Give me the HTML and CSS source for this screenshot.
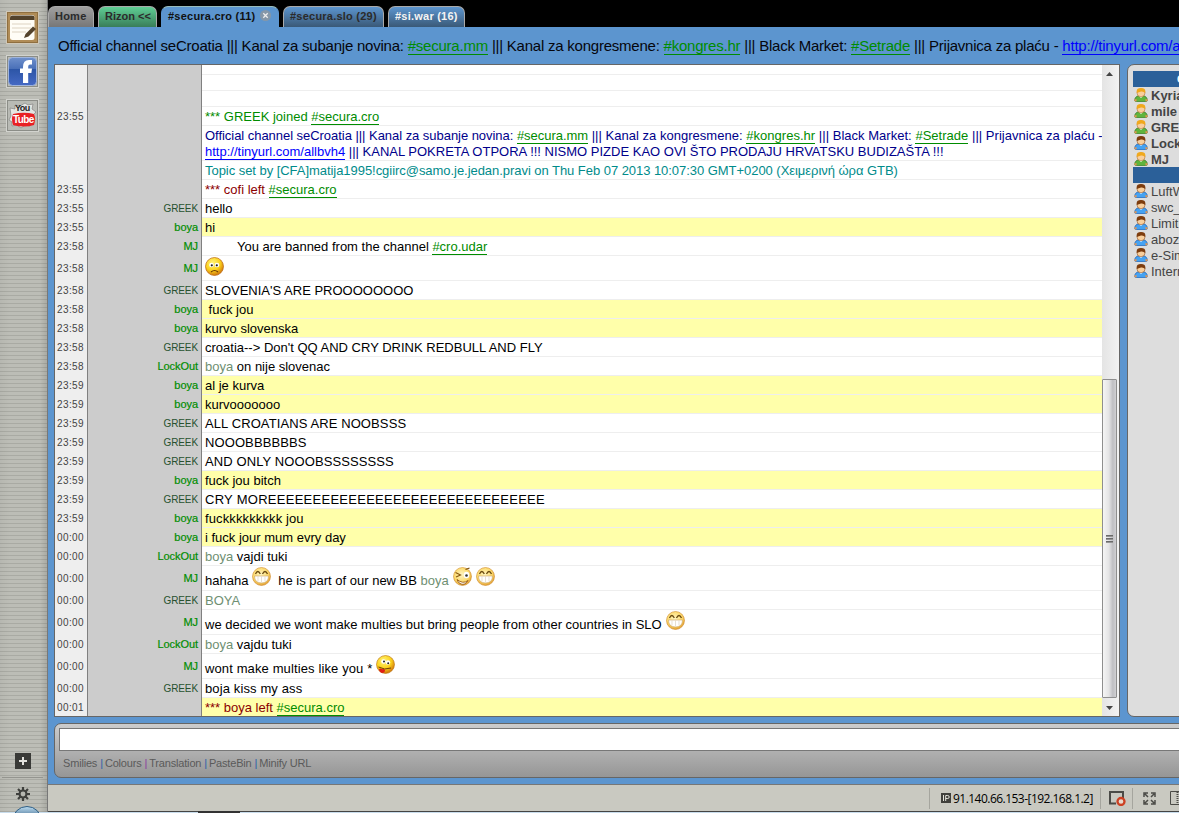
FILE: index.html
```
<!DOCTYPE html>
<html lang="hr">
<head>
<meta charset="utf-8">
<title>#secura.cro</title>
<link rel="stylesheet" href="styles.css">
</head>
<body>
<svg class="defs" width="0" height="0" aria-hidden="true">
  <defs>
    <radialGradient id="face" cx=".4" cy=".3" r=".75"><stop offset="0" stop-color="#fff37a"/><stop offset=".55" stop-color="#fbd21c"/><stop offset="1" stop-color="#c9680a"/></radialGradient>
    <radialGradient id="pale" cx=".45" cy=".4" r=".7"><stop offset="0" stop-color="#fff6c4"/><stop offset=".6" stop-color="#fcd96a"/><stop offset="1" stop-color="#d07a12"/></radialGradient>
    <linearGradient id="fb" x1="0" y1="0" x2="0" y2="1"><stop offset="0" stop-color="#6f90cc"/><stop offset=".4" stop-color="#4a70b8"/><stop offset=".41" stop-color="#2c55a6"/><stop offset="1" stop-color="#4569c4"/></linearGradient>
  </defs>
  <symbol id="sad" viewBox="0 0 19 19"><circle cx="9.5" cy="9.5" r="9" fill="url(#face)" stroke="#b9640c" stroke-width=".7"/><circle cx="6.5" cy="8" r="2.3" fill="#fff"/><circle cx="12" cy="8" r="2.3" fill="#fff"/><circle cx="6.8" cy="8.3" r="1.1" fill="#222"/><circle cx="11.8" cy="8.3" r="1.1" fill="#222"/><path d="M6 15q3.5-3 7 0" fill="none" stroke="#6d3a05" stroke-width="1.2"/></symbol>
  <symbol id="grin" viewBox="0 0 19 19"><circle cx="9.5" cy="9.5" r="9" fill="url(#pale)" stroke="#d08a2a" stroke-width=".6"/><path d="M3.5 7q2.300-5 4.800 0M10.500 7q2.500-5 5 0" fill="none" stroke="#6a4a10" stroke-width="1.300"/><path d="M2.500 9h14q0 7-7 7t-7-7z" fill="#fff" stroke="#c9a060" stroke-width=".6"/><path d="M6 9.500v5M9.500 9.500v6M13 9.500v5" stroke="#ddd3be" stroke-width=".7"/></symbol>
  <symbol id="wink" viewBox="0 0 19 19"><circle cx="9.500" cy="9.500" r="9" fill="url(#pale)" stroke="#c98018" stroke-width=".5"/><path d="M2.500 5.500l5 2.500L3 10" fill="none" stroke="#8a5a10" stroke-width="1.200"/><ellipse cx="13.500" cy="8" rx="2.800" ry="3.200" fill="#fff"/><circle cx="13.500" cy="8.500" r="1.300" fill="#333"/><path d="M12.500 2.500l4-1.500" stroke="#7a4a08" stroke-width="1.200"/><path d="M4 12.500q6 5 11 1-3 5-7 3.500-3-1-4-4.500z" fill="#fff" stroke="#9a5a10" stroke-width=".9"/></symbol>
  <symbol id="tongue" viewBox="0 0 19 19"><circle cx="9.500" cy="9.500" r="9" fill="url(#face)" stroke="#b9700c" stroke-width=".6"/><circle cx="7.500" cy="6.500" r="2.300" fill="#fff"/><circle cx="12" cy="7.500" r="2.200" fill="#fff"/><circle cx="8" cy="6.500" r="1" fill="#222"/><circle cx="12.200" cy="8.200" r="1" fill="#222"/><path d="M2.500 12q6 3.500 12.500 1" fill="none" stroke="#704006" stroke-width="1"/><path d="M3 14q2-1 3 .3 2-1 3 .7 0 3-3 3-3-1-3-4z" fill="#df1f16"/></symbol>
  <symbol id="op" viewBox="0 0 14 14"><path d="M.8 13q-.5-5.500 6.200-5.500T13.200 13l-2 .7h-8.400z" fill="#5fb43c" stroke="#3c7d28" stroke-width=".8"/><path d="M5 8l2 2 2-2z" fill="#fff"/><rect x="3.200" y="1" width="7.600" height="7.500" rx="3" fill="#f9cf9c" stroke="#b36d2b" stroke-width=".6"/><path d="M2.700 5V3q0-3 4.300-3t4.300 3v2q-2-2-4.300-1.500T2.700 5z" fill="#f0a81c"/><path d="M.5 13v-1.500l2-.5v2.500zM13.500 13v-1.500l-2-.5v2.500z" fill="#e79650"/></symbol>
  <symbol id="man" viewBox="0 0 14 14"><path d="M.8 13q-.5-5.500 6.200-5.500T13.200 13l-2 .7h-8.400z" fill="#45a2f2" stroke="#2366b8" stroke-width=".8"/><path d="M5 8l2 2 2-2z" fill="#fff"/><rect x="3.200" y="1" width="7.600" height="7.500" rx="3" fill="#f9cf9c" stroke="#8d4c1b" stroke-width=".6"/><path d="M2.700 5V3q0-3 4.300-3t4.300 3v2q-2-2-4.300-1.500T2.700 5z" fill="#7d3c0d"/><path d="M.5 13v-1.500l2-.5v2.500zM13.500 13v-1.500l-2-.5v2.500z" fill="#e79650"/></symbol>
</svg>
<div class="screen">
  <aside class="dock">
    <div class="dock-top">
      <svg class="app" viewBox="0 0 33 33"><rect x=".5" y=".5" width="32" height="32" fill="#b08c57" stroke="#d0c8b8"/><rect x="1.500" y="1.500" width="30" height="30" fill="none" stroke="#8f6f40"/><rect x="4" y="4" width="24.500" height="25" rx="2.500" fill="#fffdf6"/><path d="M4 9V6.500Q4 4.500 6.500 4.500h19.500Q28.500 4.500 28.500 6.500V9z" fill="#54432c"/><path d="M6 13h19M6 17h19M6 21h14" stroke="#ddd3c2"/><path d="M18 27l1.500-4L27 15.500l3 2.500-7.500 7.500z" fill="#54432c"/></svg>
      <svg class="app" viewBox="0 0 33 33"><rect x=".5" y=".5" width="32" height="32" fill="#b9bbb5" stroke="#d2d3ce"/><rect x="1.500" y="1.500" width="30" height="30" fill="none" stroke="#8b8d87"/><rect x="2.500" y="2.500" width="28" height="28" rx="4" fill="url(#fb)" stroke="#9fb4dc"/><path d="M17 28V18h-3v-4.500h3V12q0-7 6-7h3v4.500h-2q-1.800 0-1.800 2v2h3.800l-.6 4.500h-3.200v10z" fill="#fff"/></svg>
      <div class="tube"><svg class="app" viewBox="0 0 33 33"><rect x=".5" y=".5" width="32" height="32" fill="#b9bbb5" stroke="#d2d3ce"/><rect x="1.500" y="1.500" width="30" height="30" fill="none" stroke="#8b8d87"/><path d="M4 9l5 1 0-4 5 1 5-3 3 2 5-1-1 5 4 3-3 3 2 5-3 2-2 4-5-1-4 3-4-3-5 1 0-4-3-2 2-4z" fill="#e4e5e2" stroke="#777" stroke-width=".6"/><path d="M7 15q11-2.500 21 0 2 5 0 11-10 3-21 0-2-6 0-11z" fill="#e82023"/></svg><span class="you">You</span><span class="tub">Tube</span></div>
    </div>
    <div class="dock-bottom">
      <svg class="plus" viewBox="0 0 16 16"><path fill="#393a37" d="M0 0h16v16H0z"/><path d="M8 4v8M4 8h8" stroke="#e2e2dd" stroke-width="2"/></svg>
      <svg class="gear" viewBox="0 0 14 14"><g stroke="#3f403d" stroke-width="2.200"><path d="M7 0v14M0 7h14M2 2l10 10M12 2L2 12"/></g><circle cx="7" cy="7" r="4.500" fill="#3f403d"/><circle cx="7" cy="7" r="2.400" fill="#b6b7b0"/></svg>
    </div>
  </aside>
  <main class="main">
    <nav class="tabs">
      <div class="tab home">Home</div><div class="tab net">Rizon &lt;&lt;</div><div class="tab active">#secura.cro (11)<svg class="close" viewBox="0 0 11 11"><circle cx="5.500" cy="5.500" r="5.500" fill="#8597a8"/><path d="M3.300 3.300l4.400 4.400M7.700 3.300L3.300 7.700" stroke="#eee" stroke-width="1.300"/></svg></div><div class="tab slo">#secura.slo (29)</div><div class="tab war">#si.war (16)</div>
    </nav>
    <div class="topic">Official channel seCroatia ||| Kanal za subanje novina: <a>#secura.mm</a> ||| Kanal za kongresmene: <a>#kongres.hr</a> ||| Black Market: <a>#Setrade</a> ||| Prijavnica za plaću - <a class="url">http://tinyurl.com/allbvh4</a></div>
    <div class="middle">
      <section class="chat">
        <div class="log">
          <div class="row blank first"><time></time><b></b><p></p></div>
          <div class="row blank"><time></time><b></b><p></p></div>
          <div class="row blank"><time></time><b></b><p></p></div>
          <div class="row"><time>23:55</time><b></b><p class="join">*** GREEK joined <a>#secura.cro</a></p></div>
          <div class="row two"><time></time><b></b><p class="navy"><span class="l1">Official channel seCroatia ||| Kanal za subanje novina: <a>#secura.mm</a></span><span class="l2"> ||| Kanal za kongresmene: <a>#kongres.hr</a> ||| Black Market: <a>#Setrade</a> ||| Prijavnica za plaću -</span><br><a class="url">http://tinyurl.com/allbvh4</a> ||| KANAL POKRETA OTPORA !!! NISMO PIZDE KAO OVI ŠTO PRODAJU HRVATSKU BUDIZAŠTA !!!</p></div>
          <div class="row"><time></time><b></b><p class="teal">Topic set by [CFA]matija1995!cgiirc@samo.je.jedan.pravi on Thu Feb 07 2013 10:07:30 GMT+0200 (Χειμερινή ώρα GTB)</p></div>
          <div class="row"><time>23:55</time><b></b><p class="left">*** cofi left <a>#secura.cro</a></p></div>
          <div class="row"><time>23:55</time><b class="greek">GREEK</b><p>hello</p></div>
          <div class="row hl"><time>23:55</time><b>boya</b><p>hi</p></div>
          <div class="row"><time>23:58</time><b>MJ</b><p class="indent">You are banned from the channel <a>#cro.udar</a></p></div>
          <div class="row tall"><time>23:58</time><b>MJ</b><p><svg class="smile sad"><use href="#sad"/></svg></p></div>
          <div class="row"><time>23:58</time><b class="greek">GREEK</b><p>SLOVENIA'S ARE PROOOOOOOO</p></div>
          <div class="row hl"><time>23:58</time><b>boya</b><p>&nbsp;fuck jou</p></div>
          <div class="row hl"><time>23:58</time><b>boya</b><p>kurvo slovenska</p></div>
          <div class="row"><time>23:58</time><b class="greek">GREEK</b><p>croatia--&gt; Don't QQ AND CRY DRINK REDBULL AND FLY</p></div>
          <div class="row"><time>23:58</time><b>LockOut</b><p><i>boya</i> on nije slovenac</p></div>
          <div class="row hl"><time>23:59</time><b>boya</b><p>al je kurva</p></div>
          <div class="row hl"><time>23:59</time><b>boya</b><p>kurvooooooo</p></div>
          <div class="row"><time>23:59</time><b class="greek">GREEK</b><p class="caps">ALL CROATIANS ARE NOOBSSS</p></div>
          <div class="row"><time>23:59</time><b class="greek">GREEK</b><p class="caps">NOOOBBBBBBS</p></div>
          <div class="row"><time>23:59</time><b class="greek">GREEK</b><p class="caps">AND ONLY NOOOBSSSSSSSS</p></div>
          <div class="row hl"><time>23:59</time><b>boya</b><p>fuck jou bitch</p></div>
          <div class="row"><time>23:59</time><b class="greek">GREEK</b><p class="cry">CRY MOREEEEEEEEEEEEEEEEEEEEEEEEEEEEEEE</p></div>
          <div class="row hl"><time>23:59</time><b>boya</b><p class="loose">fuckkkkkkkkk jou</p></div>
          <div class="row hl"><time>00:00</time><b>boya</b><p>i fuck jour mum evry day</p></div>
          <div class="row"><time>00:00</time><b>LockOut</b><p><i>boya</i> vajdi tuki</p></div>
          <div class="row tall"><time>00:00</time><b>MJ</b><p>hahaha <svg class="smile back"><use href="#grin"/></svg>&nbsp; he is part of our new BB <i>boya</i> <svg class="smile"><use href="#wink"/></svg> <svg class="smile back"><use href="#grin"/></svg></p></div>
          <div class="row"><time>00:00</time><b class="greek">GREEK</b><p><i>BOYA</i></p></div>
          <div class="row tall"><time>00:00</time><b>MJ</b><p>we decided we wont make multies but bring people from other countries in SLO <svg class="smile"><use href="#grin"/></svg></p></div>
          <div class="row"><time>00:00</time><b>LockOut</b><p><i>boya</i> vajdu tuki</p></div>
          <div class="row tall"><time>00:00</time><b>MJ</b><p class="loose">wont make multies like you * <svg class="smile back"><use href="#tongue"/></svg></p></div>
          <div class="row"><time>00:00</time><b class="greek">GREEK</b><p class="loose">boja kiss my ass</p></div>
          <div class="row hl"><time>00:01</time><b></b><p class="left">*** boya left <a>#secura.cro</a></p></div>
        </div>
        <div class="scroll">
          <svg class="arrow" viewBox="0 0 7 4"><path d="M0 4L3.500 0 7 4z" fill="#444"/></svg>
          <div class="thumb"><span></span><span></span><span></span></div>
          <svg class="arrow down" viewBox="0 0 7 4"><path d="M0 0h7L3.500 4z" fill="#444"/></svg>
        </div>
      </section>
      <section class="users">
        <div class="group">Operators</div>
        <div class="user op"><svg><use href="#op"/></svg>Kyria</div>
        <div class="user op"><svg><use href="#op"/></svg>mile</div>
        <div class="user op"><svg><use href="#op"/></svg>GREEK</div>
        <div class="user op"><svg><use href="#man"/></svg>LockOut</div>
        <div class="user op"><svg><use href="#op"/></svg>MJ</div>
        <div class="group"></div>
        <div class="user"><svg><use href="#man"/></svg>LuftW</div>
        <div class="user"><svg><use href="#man"/></svg>swc_</div>
        <div class="user"><svg><use href="#man"/></svg>Limit</div>
        <div class="user"><svg><use href="#man"/></svg>aboz</div>
        <div class="user"><svg><use href="#man"/></svg>e-Sim</div>
        <div class="user"><svg><use href="#man"/></svg>Intern</div>
      </section>
    </div>
    <section class="composer">
      <div class="input"></div>
      <div class="tools">Smilies<s>|</s>Colours<s class="v">|</s>Translation<s>|</s>PasteBin<s>|</s>Minify URL</div>
    </section>
    <footer class="status">
      <div class="ip"><svg viewBox="0 0 10 10"><path fill="#40403c" d="M0 0h10v10H0z"/><path d="M2.500 2v6M4.700 8V2.500h2q1.500 0 1.500 1.500t-1.500 1.500h-2" fill="none" stroke="#e4e4dc"/></svg>91.140.66.153-[192.168.1.2]</div>
      <div class="cell block"><svg viewBox="0 0 17 15"><path d="M7 12.500H1V1h13v6" fill="none" stroke="#4b4b47" stroke-width="2"/><circle cx="12" cy="10.500" r="3.500" fill="#e8d9ce" stroke="#cc4123" stroke-width="2.300"/></svg></div>
      <div class="cell full"><svg viewBox="0 0 13 13"><path d="M1 5V1h4M8 1h4v4M12 8v4H8M5 12H1V8M2 2l3 3M11 2L8 5M2 11l3-3M11 11L8 8" fill="none" stroke="#4b4b47" stroke-width="1.500"/></svg><svg class="split" viewBox="0 0 14 14"><path d="M.5.5h14v13H.5z" fill="none" stroke="#4b4b47"/><path d="M7.500 1v12" stroke="#4b4b47" stroke-dasharray="1 1" stroke-width="2"/></svg></div>
    </footer>
  </main>
  <div class="taskbar"><div class="orb"></div><div class="task"></div></div>
</div>
</body>
</html>
```
FILE: styles.css
```
* { box-sizing: border-box; }
body { margin: 0; font-family: "Liberation Sans", Arial, sans-serif; overflow: hidden; }
.defs { position: absolute; }
.screen { width: 1179px; height: 813px; overflow: hidden; display: grid; grid-template: 812px 1px / 48px 1131px; }
.dock { display: flex; flex-direction: column; justify-content: space-between; border-right: 1px solid #777; background: linear-gradient(90deg, rgba(0,0,0,.03), transparent 20% 85%, rgba(0,0,0,.1)), repeating-linear-gradient(#bcbdb6 0 3px, #a9aaa3 3px 4px); }
.dock-top { padding: 11px 0 0 6px; display: flex; flex-direction: column; gap: 11px; }
.app { width: 33px; height: 33px; display: block; }
.tube { position: relative; height: 33px; }
.you, .tub { position: absolute; left: 9px; top: 4px; font-size: 9px; line-height: 10px; font-weight: bold; color: #222; letter-spacing: -.6px; }
.tub { top: 14px; left: 7px; color: #fff; font-size: 10px; line-height: 13px; letter-spacing: -.6px; }
.dock-bottom { height: 59px; display: flex; flex-direction: column; align-items: center; padding-right: 2px; }
.plus { width: 16px; height: 16px; flex: none; }
.dock-bottom::after { content: ""; width: 41px; height: 1px; background: #94958f; order: 1; margin-top: 8px; }
.gear { width: 14px; height: 14px; order: 2; margin-top: 9px; flex: none; }
.main { background: #5c95cf; display: flex; flex-direction: column; overflow: hidden; }
.tabs { height: 27px; flex: none; background: #000; display: flex; gap: 4px; padding-top: 6px; }
.tab { height: 21px; border: 1px solid #aaa; border-bottom: 0; border-radius: 7px 7px 0 0; font-size: 11px; font-weight: bold; line-height: 18px; padding-left: 6px; letter-spacing: .23px; white-space: nowrap; display: flex; align-items: center; padding-bottom: 3px; color: #2b2b2b; }
.home { width: 46px; background: linear-gradient(#a0a0a0, #777); }
.net { width: 59px; background: linear-gradient(#5fce95, #397d58); letter-spacing: 0; }
.active { width: 118px; background: #5c95cf; color: #111; border-color: #5c95cf; border-top-color: #9bb; }
.slo { width: 101px; background: linear-gradient(#5c95cf, #3a5977); }
.war { width: 77px; background: linear-gradient(#5c95cf, #3a5977); color: #f4f4f4; }
.close { width: 11px; height: 11px; margin-left: 5px; }
.topic { height: 37px; flex: none; padding-left: 10px; font-size: 15px; line-height: 38px; letter-spacing: -.228px; white-space: nowrap; color: #06060c; }
a { color: #008c00; text-decoration: none; border-bottom: 1px solid; }
a.url { color: #00f; }
.middle { display: flex; gap: 7px; height: 653px; flex: none; padding-left: 6px; }
.chat { width: 1066px; flex: none; height: 653px; border: 1px solid #666; background: #fff; display: flex; }
.log { width: 1047px; flex: none; overflow: hidden; background: linear-gradient(90deg, #eee 32px, #808080 32px 33px, #ccc 33px 146px, #808080 146px 147px, #fff 147px); }
.row { display: grid; grid-template: 100% / 32px 113px 1fr; column-gap: 1px; height: 19px; }
.row.blank { height: 16px; }
.row.first { height: 10px; }
.row.two { height: 35px; }
.row.tall { height: 25px; }
.row > * { margin: 0; font-weight: normal; white-space: nowrap; }
.row time { font-size: 10px; line-height: 20px; padding-left: 2px; letter-spacing: .4px; color: #444; }
.row b { font-size: 11px; line-height: 18px; text-align: right; padding-right: 3px; color: #008c00; -webkit-text-stroke: .2px #008c00; letter-spacing: -.05px; }
.row b.greek { color: #27512f; font-size: 10px; line-height: 20px; letter-spacing: -.1px; -webkit-text-stroke: 0; }
.row.tall time { line-height: 26px; }
.row.tall b { line-height: 24px; }
.row p { font-size: 13px; line-height: 16px; padding: 2px 0 0 3px; border-bottom: 1px solid #eee; color: #000; }
.row.blank p { padding: 0; }
.row.hl p { background: #ffffaa; }
.row p.join { color: #008c00; }
.row p.left { color: #8b0000; }
.row p.navy { color: #00008b; }
.l1 { letter-spacing: -.04px; }
.l2 { letter-spacing: .025px; }
.row p.teal { color: #008b8b; letter-spacing: -.045px; }
.cry { letter-spacing: .27px; }
.caps { letter-spacing: .1px; }
.loose { letter-spacing: .12px; }
.row p.indent { padding-left: 35px; }
.row p a { display: inline-block; line-height: 14px; height: 15px; vertical-align: baseline; }
i { font-style: normal; color: #6f8f72; }
.row.tall p { line-height: 21px; padding-top: 1px; }
.smile { width: 19px; height: 19px; vertical-align: -1px; margin-left: 1px; }
.smile.back { margin-left: 0; }
.smile.sad { margin-left: 0; }
.scroll { width: 17px; background: linear-gradient(90deg, #e4e4e4, #f2f2f2); display: flex; flex-direction: column; align-items: center; padding: 7px 2px 0 0; }
.arrow { width: 7px; height: 4px; flex: none; }
.thumb { margin-top: 303px; width: 15px; height: 319px; flex: none; border: 1px solid #8e8e8e; border-radius: 1px; background: linear-gradient(90deg, #f5f5f5, #e4e4e5 45%, #bfbfc3 75%, #d0d0d2); display: flex; flex-direction: column; align-items: center; justify-content: center; gap: 1px; }
.thumb span { width: 7px; height: 2px; background: linear-gradient(#555, #aaa); }
.arrow.down { margin-top: 8px; }
.users { width: 160px; flex: none; border: 1px solid #666; border-radius: 7px; background: #ddd; padding: 6px 5px; font-size: 13px; color: #444; }
.group { height: 16px; background: #2b6099; color: #fff; font-size: 11px; line-height: 16px; padding-left: 44px; font-weight: bold; }
.user { height: 16px; line-height: 17px; display: flex; align-items: center; gap: 3px; padding-left: 1px; white-space: nowrap; }
.user svg { width: 14px; height: 14px; }
.user.op { font-weight: bold; }
.composer { margin: 6px 0 0 6px; height: 55px; width: 1200px; flex: none; border: 1px solid #666; border-radius: 7px; background: linear-gradient(#ccc, #969696); padding: 4px; }
.input { height: 23px; background: #fff; border: 1px solid #777; }
.tools { padding: 6px 0 0 4px; font-size: 11px; line-height: 13px; letter-spacing: -.18px; color: #5a5a5a; white-space: nowrap; }
s { text-decoration: none; color: #2a5fa8; margin: 0 2px 0 3px; }
s.v { color: #8a3fa0; }
.status { margin-top: 6px; height: 28px; flex: none; background: #c9c9c1; border-top: 1px solid #777; border-bottom: 1px solid #444; display: flex; align-items: center; justify-content: flex-end; font: 12px "Open Sans", "Noto Sans", sans-serif; color: #000; }
.ip { height: 21px; border-left: 1px solid #a5a59e; display: flex; align-items: center; width: 171px; padding-left: 11px; gap: 2px; letter-spacing: -.53px; white-space: nowrap; }
.ip svg { width: 10px; height: 10px; flex: none; }
.cell { height: 21px; border-left: 1px solid #a5a59e; display: flex; align-items: center; }
.block { width: 32px; padding-left: 8px; }
.block svg { width: 17px; height: 15px; }
.full { width: 47px; padding-left: 10px; gap: 14px; }
.full svg { width: 13px; height: 13px; flex: none; }
.full .split { width: 14px; height: 14px; }
.taskbar { grid-column: 1 / 3; background: #c8dcec; position: relative; }
.orb { position: absolute; left: 12px; top: -6px; width: 30px; height: 30px; border-radius: 50%; border: 1px solid #2f5f86; background: linear-gradient(#b9d9ee, #6e94b2 25%); }
.task { position: absolute; left: 198px; top: -1px; width: 42px; height: 2px; background: #333; }
```
